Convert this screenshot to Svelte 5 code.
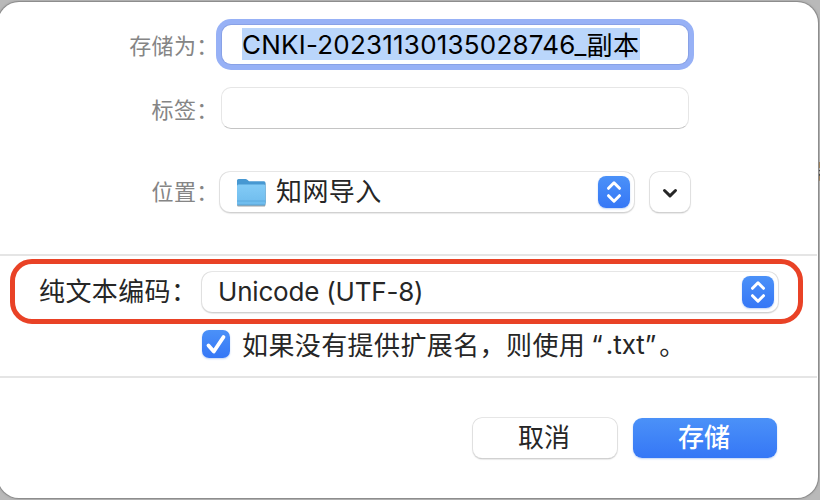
<script>
  let filename = 'CNKI-20231130135028746_';
  let suffix = '副本';
</script>

{#snippet stepper()}
  <span class="stepper">
    <svg width="32" height="32" viewBox="0 0 32 32">
      <path d="M10.5 12.3 16 6.8l5.5 5.5M10.5 19.7l5.5 5.5 5.5-5.5" />
    </svg>
  </span>
{/snippet}

<main>
  <div class="behind">器</div>
  <section class="sheet">
    <div class="row name">
      <span class="label">存储为<i>：</i></span>
      <div class="input focused">
        <span class="selection"><span class="latin filename">{filename}</span><span class="cjk">{suffix}</span></span>
      </div>
    </div>
    <div class="row tags">
      <span class="label">标签<i>：</i></span>
      <div class="input empty"></div>
    </div>
    <div class="row place">
      <span class="label">位置<i>：</i></span>
      <div class="select location">
        <svg class="folder" width="32" height="32" viewBox="0 0 32 32">
          <defs>
            <linearGradient id="front" x2="0" y2="1">
              <stop offset="0" stop-color="#83cbf6" />
              <stop offset="1" stop-color="#6dbbed" />
            </linearGradient>
          </defs>
          <path d="M1 27V4.5Q1 3 2.5 3h7q1 0 1.8.8L13 5.300h15Q29.500 5.300 29.500 7v20z" fill="#4798d2" />
          <path d="M1 10Q1 8.500 2.500 8.500h25.500Q29.500 8.500 29.500 10v18q0 1.200-1.200 1.200H2.200Q1 29.200 1 28z" fill="url(#front)" />
          <path d="M1 25h28.500" stroke="#55a5db" stroke-width=".8" />
          <path d="M1.500 29h27.500" stroke="#5799c5" stroke-width=".8" />
        </svg>
        <span class="cjk folder-name">知网导入</span>
        {@render stepper()}
      </div>
      <button class="expand" aria-label="展开">
        <svg width="40" height="40" viewBox="0 0 40 40"><path d="m14.500 18.500 5.500 5.400 5.500-5.400" /></svg>
      </button>
    </div>
    <hr />
    <div class="encoding">
      <span class="encoding-label cjk">纯文本编码<i>：</i></span>
      <div class="select charset">
        <span class="latin charset-name">Unicode (UTF-8)</span>
        {@render stepper()}
      </div>
    </div>
    <div class="extension">
      <span class="checkbox">
        <svg width="28" height="28" viewBox="0 0 28 28"><path d="m6.500 15.500 5.300 6L21.500 7" /></svg>
      </span>
      <span class="phrase"><span class="cjk">如果没有提供扩展名，则使用</span><span class="latin quoted"><span class="open">“</span>.txt”</span><span class="cjk">。</span></span>
    </div>
    <hr />
    <div class="actions">
      <button class="cancel">取消</button>
      <button class="save">存储</button>
    </div>
  </section>
</main>

<style>
  :global(body) { margin: 0; overflow: hidden; }
  * { box-sizing: border-box; }
  main {
    position: relative;
    width: 820px;
    height: 500px;
    padding: 2px 2px 2px 0;
    overflow: hidden;
    background: #b9b9b9;
    color: #262626;
    font-family: Inter, "Noto Sans CJK SC", sans-serif;
    font-size: 26px;
  }
  .behind {
    position: absolute;
    left: 817px;
    top: 160px;
    font-size: 20px;
    line-height: 24px;
    color: #444;
  }
  .sheet {
    position: relative;
    width: 820px;
    height: 496px;
    margin-left: -2px;
    padding-top: 16px;
    border-radius: 21px;
    background: #fff;
    box-shadow: 0 0 0 1px #8d8d8d, 0 0 3px #777;
  }
  .row { display: flex; align-items: center; padding-left: 2px; }
  .name { height: 52px; }
  .tags { height: 42px; margin-top: 17px; }
  .place { height: 40px; margin-top: 43px; }
  .label {
    width: 216px;
    flex: none;
    padding-bottom: 1px;
    text-align: right;
    font: 22px/32px "Noto Sans CJK SC", sans-serif;
    letter-spacing: 0.3px;
    color: #858585;
  }
  .label i { margin-right: -2.500px; }
  .place .label { padding-bottom: 4px; }
  i { font-style: normal; }
  .cjk { font-family: "Noto Sans CJK SC", sans-serif; letter-spacing: 0.4px; white-space: nowrap; }
  .latin { white-space: nowrap; }
  .input { background: #fff; }
  .focused {
    width: 466px;
    height: 39px;
    margin-left: 6px;
    display: flex;
    align-items: center;
    padding-left: 20px;
    border-radius: 9px;
    box-shadow: 0 0 0 1px #88a1e6, 0 0 0 6px #97b1f6;
  }
  .selection {
    display: flex;
    align-items: center;
    width: 398px;
    height: 32px;
    background: #bad6fb;
    color: #000;
    line-height: 32px;
  }
  .filename { padding-top: 2px; letter-spacing: 0.22px; }
  .empty {
    width: 468px;
    height: 42px;
    margin-left: 5px;
    border: 1px solid #e6e6e6;
    border-bottom-color: #c4c4c4;
    border-radius: 10px;
  }
  .select {
    display: flex;
    align-items: center;
    height: 40px;
    padding-right: 4px;
    border-radius: 10px;
    background: #fff;
    box-shadow: 0 0 0 0.8px #dedede, 0 1px 1.5px #999;
  }
  .location { width: 414px; margin-left: 4px; padding-left: 16px; }
  .folder { filter: drop-shadow(0 1px 0.6px #aaa); }
  .folder-name { margin-left: 8px; padding-bottom: 4px; line-height: 36px; }
  .stepper {
    width: 32px;
    height: 32px;
    margin-left: auto;
    border-radius: 8px;
    background: linear-gradient(#4b91f8, #3577f6);
    box-shadow: 0 1px 2px #bfd3f5;
  }
  svg { display: block; }
  .stepper path, .checkbox path, .expand path {
    fill: none;
    stroke: #fff;
    stroke-width: 3;
    stroke-linecap: round;
    stroke-linejoin: round;
  }
  button {
    height: 40px;
    padding: 0;
    border: 0;
    border-radius: 9px;
    background: #fff;
    box-shadow: 0 0 0 0.8px #dedede, 0 1px 1.5px #999;
    color: #262626;
    font: 26px/36px "Noto Sans CJK SC", sans-serif;
  }
  .expand { width: 40px; margin-left: 16px; }
  .expand path { stroke: #262626; }
  hr { height: 2px; margin: 0 1px 0 0; border: 0; background: #e5e5e5; }
  .place + hr { margin-top: 42px; }
  .encoding {
    display: flex;
    align-items: center;
    width: 793px;
    height: 65px;
    margin: 3px 0 0 12px;
    padding-left: 24px;
    border: 5px solid #e94226;
    border-radius: 22px;
  }
  .encoding-label { width: 163px; flex: none; padding-bottom: 4px; line-height: 36px; }
  .charset { width: 576px; padding-left: 16px; }
  .charset-name { letter-spacing: -0.2px; }
  .extension { display: flex; align-items: center; height: 40px; padding-left: 204px; }
  .checkbox {
    width: 28px;
    height: 28px;
    border-radius: 7px;
    background: linear-gradient(#4b91f8, #3577f6);
    box-shadow: 0 1px 2px #bfd3f5;
  }
  .checkbox path { stroke-width: 3.8; }
  .phrase { display: flex; align-items: center; margin-left: 12px; line-height: 40px; }
  .quoted { margin: 0 3px 0 6px; padding-top: 2px; }
  .open { margin-right: 3px; }
  .extension + hr { margin-top: 12px; }
  .actions { display: flex; gap: 16px; margin: 40px 0 0 475px; }
  .actions button { width: 144px; padding: 0 2px 4px 0; }
  .actions .save {
    background: linear-gradient(#4b91f8, #3577f6);
    box-shadow: 0 1px 2px #bfd3f5;
    color: #fff;
    font-weight: 500;
  }
</style>
